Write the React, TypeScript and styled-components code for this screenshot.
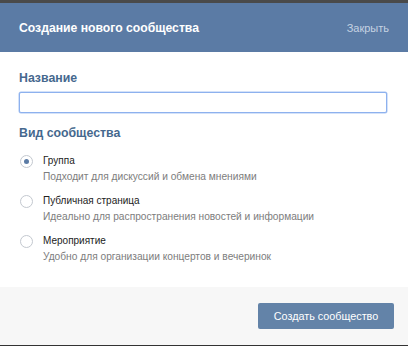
import React from "react";
import styled, { createGlobalStyle } from "styled-components";

const Global = createGlobalStyle`
  html, body { margin: 0; padding: 0; background: #333; }
  body { font-family: "Liberation Sans", Arial, sans-serif; }
  #root { width: 408px; height: 346px; overflow: hidden; }
`;

const Page = styled.div`
  width: 408px;
  height: 346px;
  display: flex;
  flex-direction: column;
  background: #333;
`;

const TopShade = styled.div`
  height: 3px;
  background: #4a4a4a;
  flex: none;
`;

const Modal = styled.div`
  height: 342px;
  display: flex;
  flex-direction: column;
  background: #fff;
`;

const Header = styled.div`
  height: 49px;
  flex: none;
  background: #5b7ba5;
  display: flex;
  align-items: center;
  justify-content: space-between;
  padding: 0 19px 0 19px;
  box-sizing: border-box;
  font-family: "Liberation Sans", Arial, sans-serif;
`;

const Title = styled.div`
  color: #fff;
  font-size: 12.2px;
  font-weight: bold;
`;

const Close = styled.div`
  color: #c5d2e2;
  font-size: 11px;
`;

const Body = styled.div`
  flex: 1;
  display: flex;
  flex-direction: column;
  padding: 19px 21px 0 19px;
  font-family: "Liberation Sans", Arial, sans-serif;
`;

const SectionLabel = styled.div<{ $top?: number }>`
  color: #45688e;
  font-weight: bold;
  font-size: 12.3px;
  margin-top: ${(p) => p.$top ?? 0}px;
  line-height: 14px;
`;

const Input = styled.div`
  margin-top: 7px;
  height: 21px;
  box-sizing: border-box;
  border: 1px solid #8db1ee;
  border-radius: 2px;
  box-shadow: 0 0 0 0.5px #a9c5f3;
  background: #fff;
`;

const Options = styled.div`
  display: flex;
  flex-direction: column;
  gap: 10px;
  margin-top: 14px;
`;

const Option = styled.div`
  display: flex;
  align-items: flex-start;
  gap: 10px;
`;

const Radio = styled.div<{ $checked?: boolean }>`
  width: 13px;
  height: 13px;
  box-sizing: border-box;
  border-radius: 50%;
  border: 1px solid #c3c8cf;
  background: #fff;
  margin-left: 1px;
  margin-top: 1px;
  display: flex;
  align-items: center;
  justify-content: center;
  flex: none;
  &::after {
    content: "";
    width: 5px;
    height: 5px;
    border-radius: 50%;
    background: #5b7ba5;
    display: ${(p) => (p.$checked ? "block" : "none")};
  }
`;

const OptionText = styled.div`
  display: flex;
  flex-direction: column;
  gap: 2px;
`;

const OptionTitle = styled.div`
  color: #222;
  font-size: 10px;
  line-height: 14px;
`;

const OptionDesc = styled.div`
  color: #7d7d7d;
  font-size: 10.2px;
  line-height: 14px;
`;

const Footer = styled.div`
  height: 58px;
  flex: none;
  background: #f7f7f7;
  display: flex;
  align-items: center;
  justify-content: flex-end;
  padding-right: 14px;
`;

const Button = styled.button`
  width: 136px;
  height: 26px;
  border: none;
  border-radius: 2px;
  background: #6383a8;
  color: #fff;
  font-size: 10.8px;
  font-family: "Liberation Sans", Arial, sans-serif;
  padding: 0;
`;

const BottomShade = styled.div`
  height: 1px;
  background: #333;
  flex: none;
`;

const options = [
  { title: "Группа", desc: "Подходит для дискуссий и обмена мнениями", checked: true },
  { title: "Публичная страница", desc: "Идеально для распространения новостей и информации" },
  { title: "Мероприятие", desc: "Удобно для организации концертов и вечеринок" },
];

export default function App() {
  return (
    <Page>
      <Global />
      <TopShade />
      <Modal>
        <Header>
          <Title>Создание нового сообщества</Title>
          <Close>Закрыть</Close>
        </Header>
        <Body>
          <SectionLabel>Название</SectionLabel>
          <Input />
          <SectionLabel $top={13}>Вид сообщества</SectionLabel>
          <Options>
            {options.map((o) => (
              <Option key={o.title}>
                <Radio $checked={o.checked} />
                <OptionText>
                  <OptionTitle>{o.title}</OptionTitle>
                  <OptionDesc>{o.desc}</OptionDesc>
                </OptionText>
              </Option>
            ))}
          </Options>
        </Body>
        <Footer>
          <Button>Создать сообщество</Button>
        </Footer>
      </Modal>
      <BottomShade />
    </Page>
  );
}
